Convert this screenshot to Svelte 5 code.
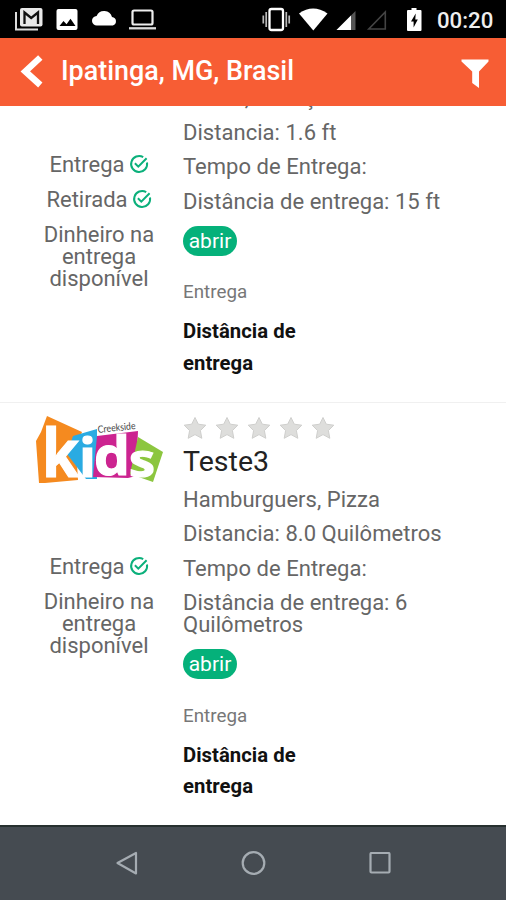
<script>
  const stores = [
    {
      name: 'Teste2',
      cuisine: 'Doces, Refeição',
      distance: '1.6 ft',
      radius: '15 ft',
      services: ['Entrega', 'Retirada']
    },
    {
      name: 'Teste3',
      cuisine: 'Hamburguers, Pizza',
      distance: '8.0 Quilômetros',
      radius: '6 Quilômetros',
      services: ['Entrega']
    }
  ];
</script>

<div class="phone">
  <div class="status">
    <svg width="160" height="38" viewBox="0 0 160 38">
      <path d="M16 12v17.500h22" fill="none" stroke="#ddd" stroke-width="2" />
      <rect x="20" y="8" width="22.500" height="18.500" rx="2" fill="#e8e8e8" />
      <path d="M24.500 24V12.500l6.700 5.500 6.800-5.500V24" fill="none" stroke="#111" stroke-width="2.300" />
      <rect x="56.500" y="9" width="21" height="21" rx="2" fill="#fff" />
      <path d="M59.500 26l4-5 3 3.200 4-5.400 5 7.200z" fill="#000" />
      <path d="M97 25.500a4.800 4.800 0 0 1-.4-9.600 8.200 8.200 0 0 1 15.400 1 4.400 4.400 0 0 1 .8 8.600z" fill="#fff" />
      <rect x="132.500" y="10.500" width="20" height="14" rx="1.500" fill="none" stroke="#eee" stroke-width="2.200" />
      <path d="M129 28.300h27" stroke="#ddd" stroke-width="2.300" />
    </svg>
    <svg class="right" width="170" height="38" viewBox="260 0 170 38">
      <rect x="269.500" y="9" width="13.500" height="21" rx="2" fill="none" stroke="#fff" stroke-width="2.300" />
      <path d="M266.200 12v15M286.300 12v15M263.300 15.500v8M289.200 15.500v8" stroke="#bbb" stroke-width="1.700" />
      <path d="M299 13.500Q313 3.500 327.500 13.500L313.300 30.500z" fill="#fff" />
      <path d="M355.500 11v19h-19z" fill="#555" />
      <path d="M351 15.500V30h-14.500z" fill="#fff" />
      <path d="M385.300 12v17h-16.500z" fill="none" stroke="#444" stroke-width="1.600" />
      <path d="M411.500 8h5v2h4q1 0 1 1v19q0 1-1 1H408q-1 0-1-1V11q0-1 1-1h3.500z" fill="#fff" />
      <path d="M415.700 13.500l-4.700 8h2.600v6l4.200-8h-2.500z" fill="#000" />
    </svg>
    <span class="time">00:20</span>
  </div>

  <header>
    <svg width="26" height="36" viewBox="0 0 26 36"><path d="M23.300 4.500L8.300 18.500l15 13.500" fill="none" stroke="#fff" stroke-width="6.400" /></svg>
    <h1>Ipatinga, MG, Brasil</h1>
    <svg width="30" height="32" viewBox="0 0 30 32"><path d="M1.500 1.500h27v2L19 13.500V30l-6.800-5V13.500L1.500 3.500z" fill="#fff" /></svg>
  </header>

  <main>
    {#each stores as store}
      <article>
        <div class="side">
          <svg class="logo" width="128" height="72" viewBox="0 0 128 72">
            <path d="M5 16l6-16 35 16-6 16 2 32-33 3H3L0 25z" fill="#f58a1f" />
            <path d="M37 20l24-7v50H50L31 38z" fill="#2aabe2" />
            <path d="M61 20l41-5-2 45-8 2-35-1z" fill="#cc2490" />
            <path d="M102 21l25 15-10 30-23-8z" fill="#8cc63f" />
            <g class="kids">
              <text x="6" y="61" font-size="66" textLength="37" lengthAdjust="spacingAndGlyphs">k</text>
              <text x="43" y="61" font-size="53" textLength="17" lengthAdjust="spacingAndGlyphs">i</text>
              <text x="58" y="59" font-size="54" textLength="36" lengthAdjust="spacingAndGlyphs">d</text>
              <text x="93" y="60.500" font-size="47" textLength="26" lengthAdjust="spacingAndGlyphs">s</text>
            </g>
            <text x="62" y="17" class="creekside" textLength="38" lengthAdjust="spacingAndGlyphs" transform="rotate(-6 62 17)">Creekside</text>
          </svg>
          {#each store.services as service}
            <p class="service">
              {service}
              <svg width="20" height="20" viewBox="0 0 20 20">
                <path d="M18 8.500A8 8 0 1 1 14.200 3.100" />
                <path d="M5.900 9.300l3.400 3.400 8.300-8.400" />
              </svg>
            </p>
          {/each}
          <p>Dinheiro na entrega disponível</p>
        </div>
        <div class="info">
          <div class="stars">
            {#each [1, 2, 3, 4, 5] as star (star)}
              <svg width="24" height="24" viewBox="0 0 24 24"><path d="M12 1.500l3.300 6.700 7.500 1-5.400 5.400 1.400 7.700-6.800-3.700-6.800 3.700 1.400-7.700L1.200 9.200l7.500-1z" /></svg>
            {/each}
          </div>
          <h2>{store.name}</h2>
          <p>{store.cuisine}</p>
          <p>Distancia: {store.distance}</p>
          <p>Tempo de Entrega:</p>
          <p>Distância de entrega: {store.radius}</p>
          <span class="badge">abrir</span>
          <div class="label">Entrega</div>
          <div class="strong">Distância de entrega</div>
        </div>
      </article>
    {/each}
  </main>

  <nav>
    <svg width="24" height="26" viewBox="0 0 24 26"><path d="M21 2v20.500L2.500 12z" /></svg>
    <svg width="26" height="26" viewBox="0 0 26 26"><circle cx="12.500" cy="12" r="10.800" /></svg>
    <svg width="24" height="24" viewBox="0 0 24 24"><rect x="2.500" y="1" width="19" height="19.500" rx="1" /></svg>
  </nav>
</div>

<style>
  .phone {
    width: 506px;
    height: 900px;
    display: flex;
    flex-direction: column;
    overflow: hidden;
    background: #fff;
    font-family: Roboto, "Liberation Sans", sans-serif;
    color: #666;
  }
  svg { display: block; flex: none; }
  h1, h2, p { margin: 0; font-weight: 400; }
  .status {
    height: 38px;
    flex: none;
    display: flex;
    align-items: center;
    background: #000;
  }
  .right { margin-left: 100px; }
  .time {
    margin-left: 7px;
    color: #eee;
    font-size: 22.200px;
    font-weight: 500;
    line-height: 38px;
    padding-top: 2px;
  }
  header {
    height: 68px;
    flex: none;
    box-sizing: border-box;
    padding: 0 16px 2px 17px;
    display: flex;
    align-items: center;
    background: #f75d34;
  }
  h1 {
    flex: 1;
    margin-left: 18px;
    color: #fff;
    font-size: 26.900px;
    font-weight: 500;
    line-height: 36px;
  }
  header svg:last-child { margin-top: 5px; }
  main {
    flex: none;
    height: 719px;
    overflow: hidden;
    display: flex;
    flex-direction: column;
    justify-content: flex-end;
  }
  article {
    flex: none;
    box-sizing: border-box;
    display: flex;
    border-top: 1px solid #f0f0f0;
    padding: 13px 0 22.500px;
  }
  .side {
    width: 124px;
    margin-left: 37px;
    text-align: center;
    font-size: 22px;
    line-height: 22px;
  }
  .logo { margin: 0 0 68px -1px; }
  .side p { margin-bottom: 13px; }
  .service { display: flex; justify-content: center; gap: 4px; }
  .service svg { fill: none; stroke: #0bb07b; stroke-width: 2; }
  .info {
    width: 290px;
    margin-left: 22px;
    font-size: 22px;
    line-height: 22px;
    letter-spacing: 0.03px;
  }
  .stars { display: flex; gap: 8px; height: 24px; }
  .stars path { fill: #dededc; stroke: #cfcfcd; stroke-width: 1; stroke-linejoin: round; }
  h2 {
    margin: 6px 0 11px;
    color: #222;
    font-size: 28.500px;
    line-height: 32px;
  }
  .info p { margin-bottom: 12.600px; }
  .badge {
    display: block;
    width: 54px;
    height: 30px;
    margin-top: 1px;
    border-radius: 15px;
    background: #05b17a;
    color: #fff;
    text-align: center;
    font-size: 21px;
    line-height: 30px;
  }
  .label { margin-top: 25.500px; font-size: 18.800px; line-height: 22px; color: #777; }
  .strong {
    width: 124px;
    margin-top: 13px;
    color: #111;
    font-size: 20.300px;
    font-weight: 700;
    line-height: 31.500px;
  }
  .kids { font-family: "Open Sans", "Noto Sans", sans-serif; font-weight: 700; fill: #fff; stroke: #fff; stroke-width: 1.200; }
  .creekside { font-family: Lato, sans-serif; font-size: 10px; fill: #444; }
  nav {
    flex: none;
    height: 75px;
    box-sizing: border-box;
    border-top: 2px solid #27302f;
    padding: 0 114px 0 115px;
    display: flex;
    align-items: center;
    justify-content: space-between;
    background: #454b51;
  }
  nav svg { fill: none; stroke: #a5acb2; stroke-width: 2.200; stroke-linejoin: round; }
</style>
